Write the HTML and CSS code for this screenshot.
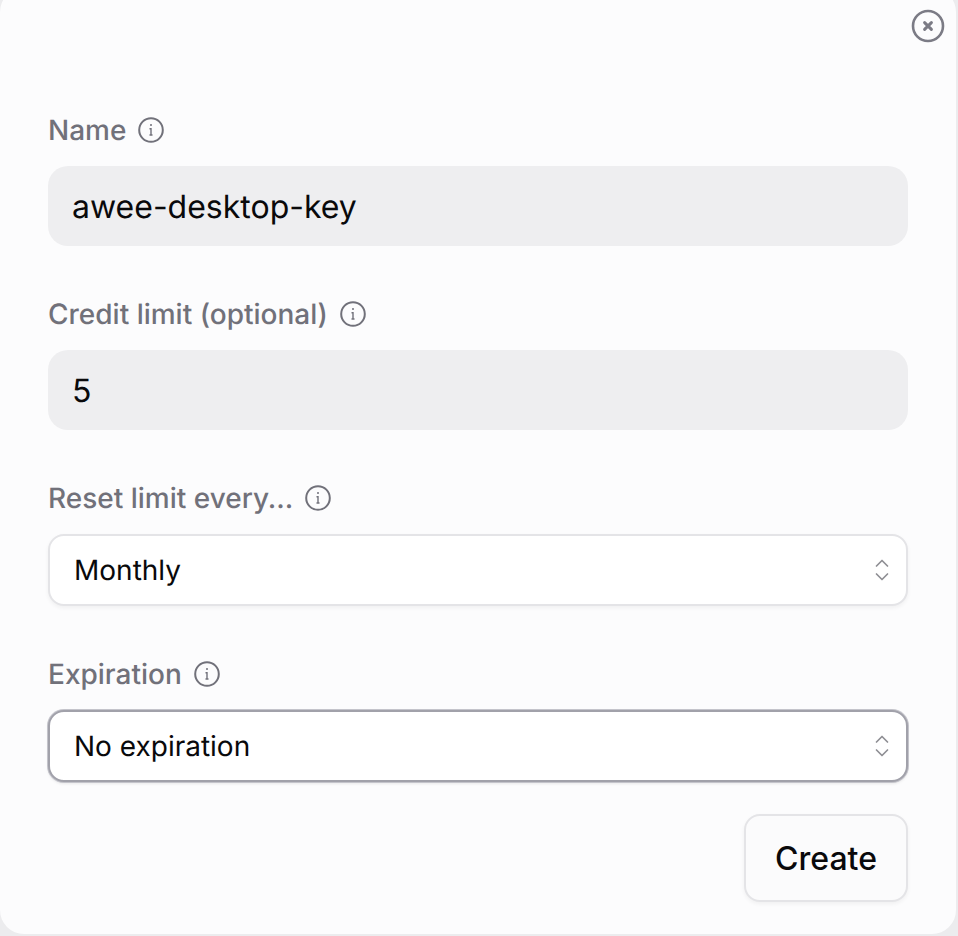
FILE: index.html
```html
<!DOCTYPE html>
<html lang="en">
<head>
<meta charset="utf-8">
<title>Create key</title>
<link rel="stylesheet" href="styles.css">
</head>
<body>
<main class="dialog">
  <button class="close" aria-label="Close">
    <svg viewBox="0 0 34 34" width="34" height="34" fill="none" stroke="#7b7b85" stroke-width="2.6" stroke-linecap="round"><circle cx="17" cy="17" r="15"/><path d="M13.6 13.6l6.800 6.800M20.400 13.600l-6.800 6.800" stroke-width="3"/></svg>
  </button>
  <form class="form">
    <div class="field">
      <div class="label"><span>Name</span><svg class="info" viewBox="0 0 26 26" fill="none" stroke="#71717a" stroke-width="2"><circle cx="13" cy="13" r="11.800"/><path d="M11.500 11.800H13V17.600M11.500 18H14.500" stroke-width="1.400"/><circle cx="13" cy="8" r="1" fill="#71717a" stroke="none"/></svg></div>
      <div class="input">awee-desktop-key</div>
    </div>
    <div class="field">
      <div class="label"><span>Credit limit (optional)</span><svg class="info" viewBox="0 0 26 26" fill="none" stroke="#71717a" stroke-width="2"><circle cx="13" cy="13" r="11.800"/><path d="M11.500 11.800H13V17.600M11.500 18H14.500" stroke-width="1.400"/><circle cx="13" cy="8" r="1" fill="#71717a" stroke="none"/></svg></div>
      <div class="input">5</div>
    </div>
    <div class="field">
      <div class="label"><span>Reset limit every...</span><svg class="info" viewBox="0 0 26 26" fill="none" stroke="#71717a" stroke-width="2"><circle cx="13" cy="13" r="11.800"/><path d="M11.500 11.800H13V17.600M11.500 18H14.500" stroke-width="1.400"/><circle cx="13" cy="8" r="1" fill="#71717a" stroke="none"/></svg></div>
      <div class="select"><span>Monthly</span><svg class="chev" viewBox="0 0 14 24" fill="none" stroke="#8f8f94" stroke-width="1.700" stroke-linecap="round" stroke-linejoin="round"><path d="M1.500 8L7 2.500L12.500 8M1.500 16L7 21.500L12.500 16"/></svg></div>
    </div>
    <div class="field field-last">
      <div class="label"><span>Expiration</span><svg class="info" viewBox="0 0 26 26" fill="none" stroke="#71717a" stroke-width="2"><circle cx="13" cy="13" r="11.800"/><path d="M11.500 11.800H13V17.600M11.500 18H14.500" stroke-width="1.400"/><circle cx="13" cy="8" r="1" fill="#71717a" stroke="none"/></svg></div>
      <div class="select focused"><span>No expiration</span><svg class="chev" viewBox="0 0 14 24" fill="none" stroke="#8f8f94" stroke-width="1.700" stroke-linecap="round" stroke-linejoin="round"><path d="M1.500 8L7 2.500L12.500 8M1.500 16L7 21.500L12.500 16"/></svg></div>
    </div>
    <div class="actions"><button type="button" class="create">Create</button></div>
  </form>
</main>
</body>
</html>
```
FILE: styles.css
```css
* { box-sizing: border-box; }
html, body { margin: 0; height: 100%; }
body {
  background: #ececee;
  font-family: Inter, "Liberation Sans", sans-serif;
  text-rendering: geometricPrecision;
  overflow: hidden;
}
.dialog {
  position: relative;
  width: 956px;
  height: 946px;
  margin-top: -12px;
  background: #fcfcfd;
  border-radius: 24px;
  padding: 122px 48px 32px;
}
.close {
  position: absolute;
  top: 21px;
  right: 11px;
  width: 34px;
  height: 34px;
  padding: 0;
  border: 0;
  background: none;
  display: block;
}
.close svg { display: block; }
.form { display: flex; flex-direction: column; }
.field { margin-bottom: 48px; }
.field-last { margin-bottom: 32px; }
.label {
  height: 40px;
  margin-bottom: 16px;
  display: flex;
  align-items: center;
  gap: 12px;
  font-size: 28px;
  font-weight: 500;
  color: #71717a;
}
.info { width: 26px; height: 26px; flex: none; }
.input {
  height: 80px;
  padding: 0 24px;
  display: flex;
  align-items: center;
  background: #eeeef0;
  border-radius: 20px;
  font-size: 32px;
  color: #09090b;
}
.select {
  height: 72px;
  padding: 0 17px 0 24px;
  display: flex;
  align-items: center;
  justify-content: space-between;
  background: #fff;
  border: 2px solid #e4e4e7;
  border-radius: 16px;
  box-shadow: 0 2px 4px rgba(0,0,0,.05);
  font-size: 28px;
  color: #09090b;
}
.focused {
  border: 2px solid #a1a1aa;
  box-shadow: 0 0 0 1px #c4c4cb, 0 2px 3px rgba(0,0,0,.08);
}
.chev { width: 14px; height: 24px; flex: none; }
.actions { display: flex; justify-content: flex-end; }
.create {
  width: 164px;
  height: 88px;
  background: #fbfbfc;
  border: 2px solid #e4e4e7;
  border-radius: 16px;
  box-shadow: 0 2px 4px rgba(0,0,0,.05);
  font-family: inherit;
  font-size: 32px;
  font-weight: 500;
  color: #09090b;
  padding: 0;
}
```
